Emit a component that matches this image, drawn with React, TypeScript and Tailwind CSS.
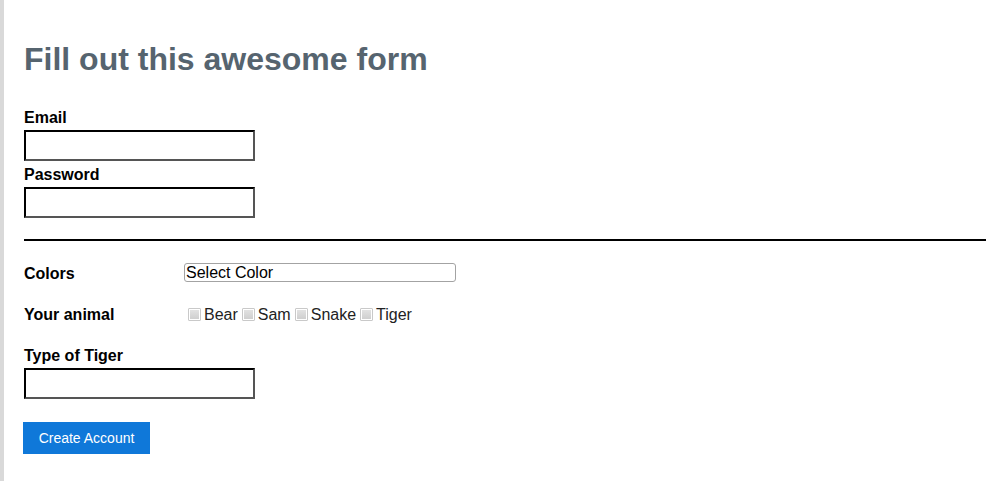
import React from "react";

function Box() {
  return (
    <span className="ml-[4px] mr-[3px] inline-flex h-[13px] w-[13px] shrink-0 items-center justify-center rounded-[1px] border border-[#c9c9c9] bg-white">
      <span className="h-[9px] w-[9px] bg-gradient-to-b from-[#e2e2e2] to-[#cfcfcf]" />
    </span>
  );
}

export default function App() {
  const animals = ["Bear", "Sam", "Snake", "Tiger"];
  const inputCls =
    "block h-[31px] w-[231px] border-2 border-t-black border-l-black border-r-[#555] border-b-[#555] bg-white";
  return (
    <div
      className="min-h-[481px] border-l-4 border-[#d9d9d9] bg-white pl-[20px] pt-[41px] text-black"
      style={{ fontFamily: '"Liberation Sans", Arial, sans-serif' }}
    >
      <h1 className="text-[32px] font-bold leading-[36px] text-[#56646f]">Fill out this awesome form</h1>

      <div className="mt-[32px] text-[16px] font-bold leading-[18px]">Email</div>
      <div className={"mt-[3px] " + inputCls} />
      <div className="mt-[5px] text-[16px] font-bold leading-[18px]">Password</div>
      <div className={"mt-[3px] " + inputCls} />

      <div className="mt-[21px] h-[2px] bg-black" />

      <div className="mt-[22px] flex h-[19px] items-center">
        <div className="w-[160px] pt-[2px] text-[16px] font-bold leading-[18px]">Colors</div>
        <div className="flex h-[19px] w-[272px] items-center rounded-[3px] border border-[#a3a3a3] pl-[1px] text-[16px] leading-[18px]">
          Select Color
        </div>
      </div>

      <div className="mt-[23px] flex h-[19px] items-center">
        <div className="w-[160px] text-[16px] font-bold leading-[18px]">Your animal</div>
        <div className="flex items-center text-[16px] leading-[18px] text-[#222]">
          {animals.map((a) => (
            <React.Fragment key={a}>
              <Box />
              <span>{a}</span>
            </React.Fragment>
          ))}
        </div>
      </div>

      <div className="mt-[23px] text-[16px] font-bold leading-[18px]">Type of Tiger</div>
      <div className={"mt-[3px] " + inputCls} />

      <button className="ml-[-1px] mt-[23px] flex h-[32px] w-[127px] items-center justify-center bg-[#0f78d9] text-[14px] leading-[16px] text-white">
        Create Account
      </button>
    </div>
  );
}
